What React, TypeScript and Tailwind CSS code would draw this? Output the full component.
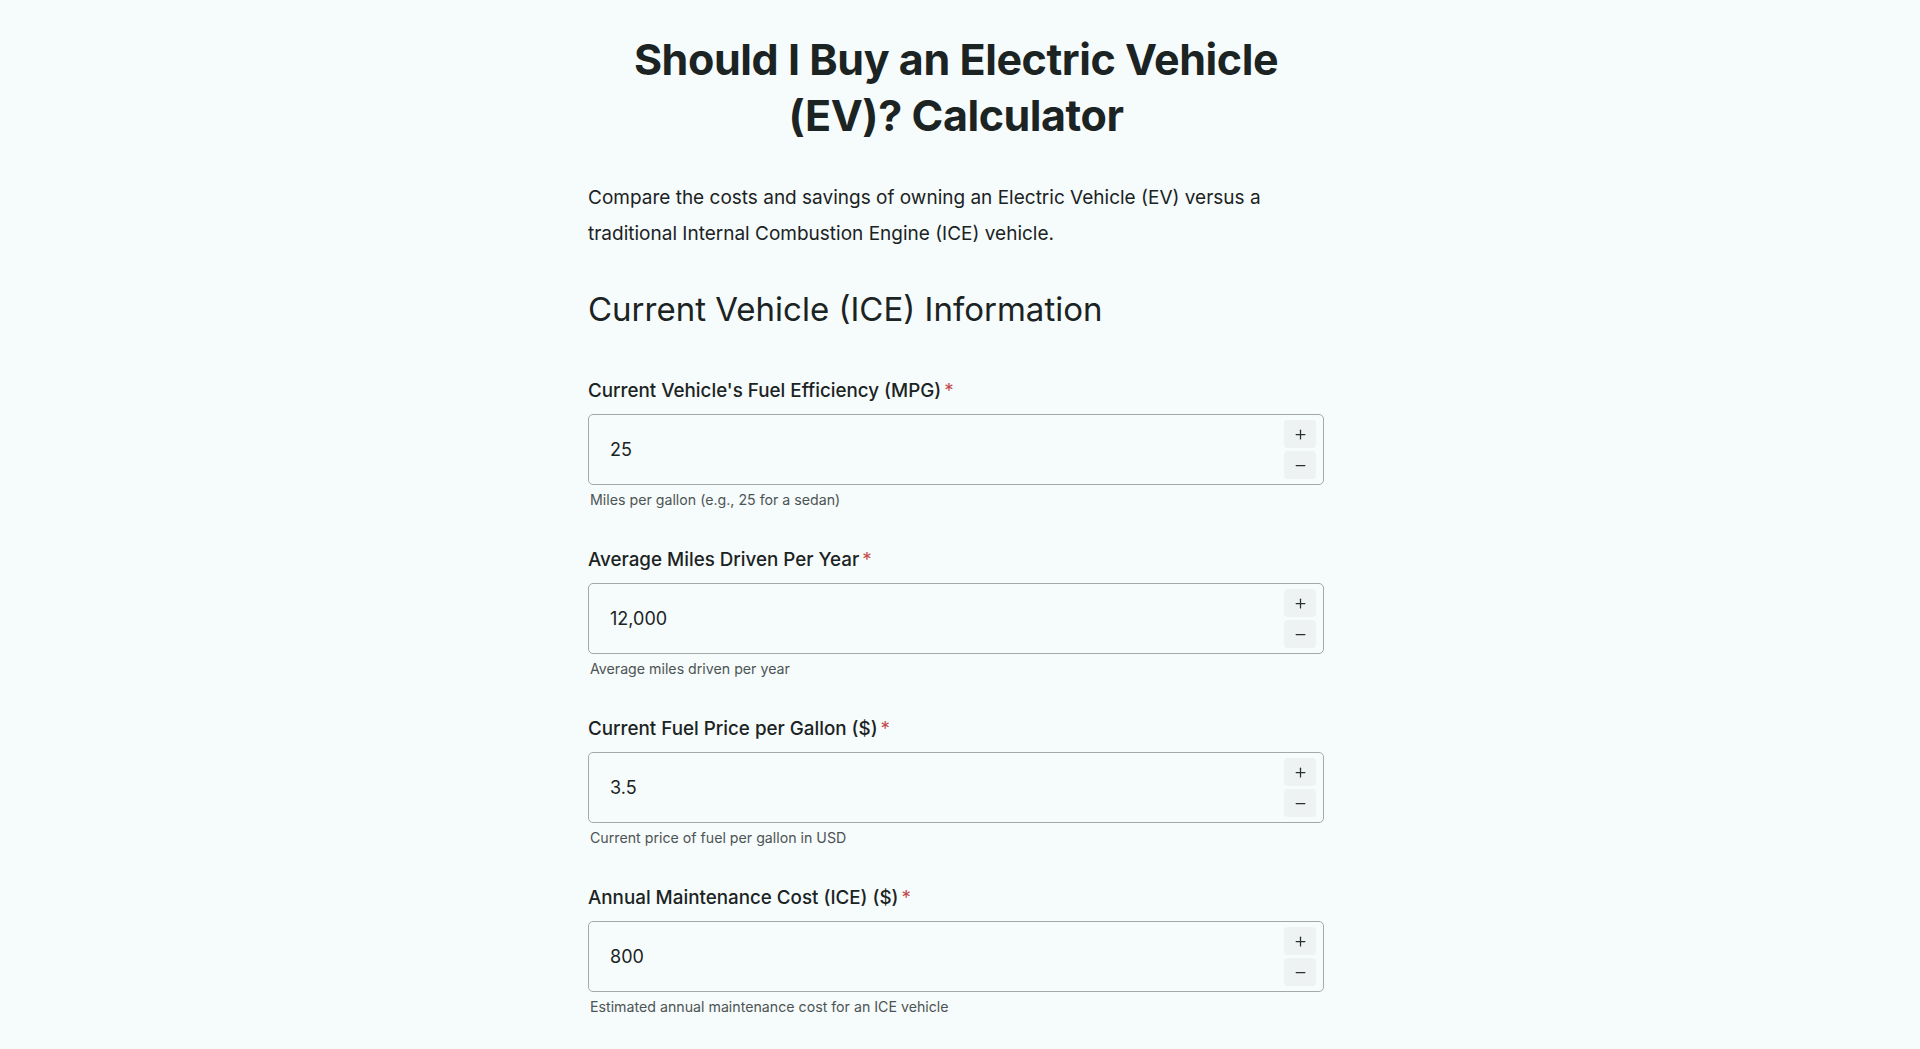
import { Plus, Minus } from 'lucide-react';

const FIELDS = [
  {
    label: "Current Vehicle's Fuel Efficiency (MPG)",
    value: '25',
    help: 'Miles per gallon (e.g., 25 for a sedan)',
  },
  {
    label: 'Average Miles Driven Per Year',
    value: '12,000',
    help: 'Average miles driven per year',
  },
  {
    label: 'Current Fuel Price per Gallon ($)',
    value: '3.5',
    help: 'Current price of fuel per gallon in USD',
  },
  {
    label: 'Annual Maintenance Cost (ICE) ($)',
    value: '800',
    help: 'Estimated annual maintenance cost for an ICE vehicle',
  },
];

export default function App() {
  return (
    <div
      className="min-h-screen bg-[#f6fbfc] text-[#1b2323] pr-[8px]"
      style={{ fontFamily: 'Inter, "Noto Sans", sans-serif' }}
    >
      <main className="w-[736px] mx-auto pt-[31px] pb-20">
        <h1 className="text-[43px] leading-[56px] font-bold text-center px-8 tracking-[-0.01em]">
          Should I Buy an Electric Vehicle (EV)? Calculator
        </h1>

        <p className="mt-[37px] text-[19px] leading-[36px]">
          Compare the costs and savings of owning an Electric Vehicle (EV) versus a traditional Internal
          Combustion Engine (ICE) vehicle.
        </p>

        <h2 className="mt-[35px] text-[33px] leading-[44px] font-normal">Current Vehicle (ICE) Information</h2>

        <div className="mt-[48px] flex flex-col gap-[38px]">
          {FIELDS.map((f) => (
            <NumberField key={f.label} {...f} />
          ))}
        </div>
      </main>
    </div>
  );
}

function NumberField({ label, value, help }: { label: string; value: string; help: string }) {
  return (
    <div>
      <label className="block text-[18.8px] leading-[24px] font-medium">
        {label}
        <span className="text-[#c24a4a] font-normal ml-[3px]">*</span>
      </label>
      <div className="mt-[11px] h-[71px] flex items-center border border-[#a3a8a8] rounded-[5px] bg-[#f6fbfc]">
        <input
          readOnly
          value={value}
          className="flex-1 h-full bg-transparent pl-[21px] text-[18px] outline-none"
        />
        <div className="flex flex-col gap-[3px] pr-[7px]">
          <button className="w-[32px] h-[28px] flex items-center justify-center rounded bg-[#eef2f2] text-[#2a3030]">
            <Plus size={15} strokeWidth={2} />
          </button>
          <button className="w-[32px] h-[28px] flex items-center justify-center rounded bg-[#eef2f2] text-[#2a3030]">
            <Minus size={15} strokeWidth={2} />
          </button>
        </div>
      </div>
      <p className="mt-[5px] pl-[2px] text-[14.2px] leading-[20px] text-[#4d5454]">{help}</p>
    </div>
  );
}
